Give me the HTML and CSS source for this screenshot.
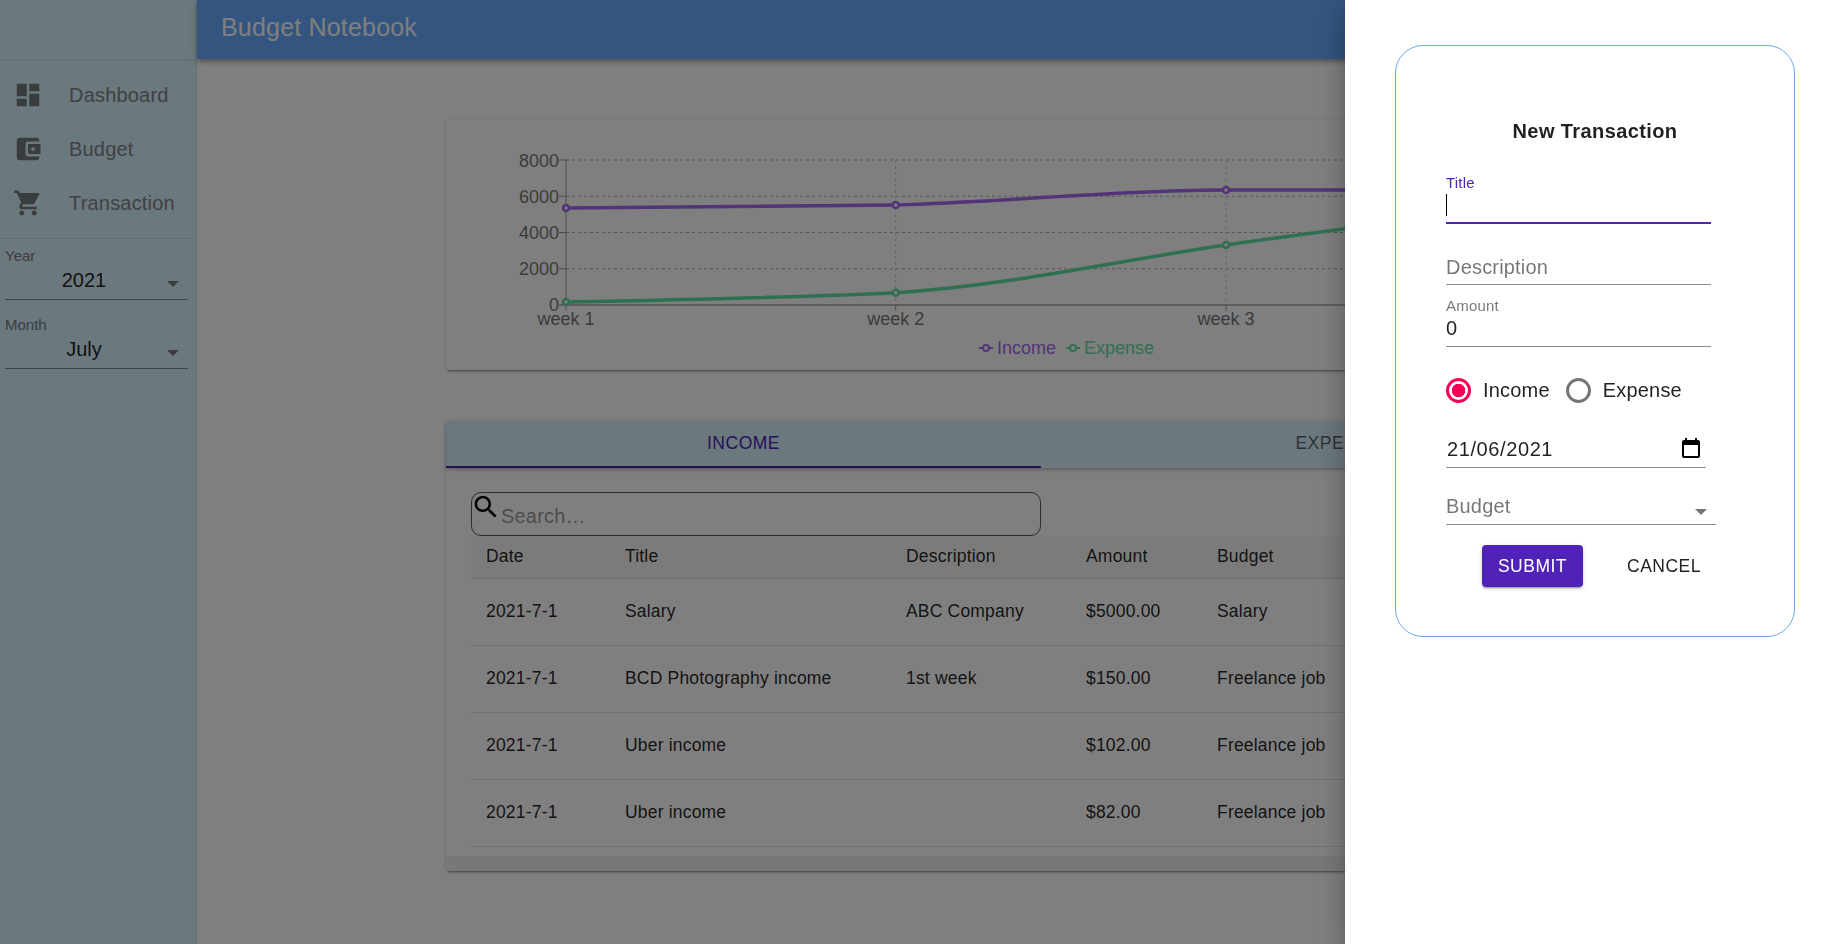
FILE: index.html
```html
<!DOCTYPE html>
<html lang="en">
<head>
  <meta charset="UTF-8"/>
  <meta name="viewport" content="width=device-width, initial-scale=1.0"/>
  <title>Budget Notebook</title>
  <link rel="stylesheet" href="styles.css">
</head>
<body>

  <div class="app">
    <aside class="sidebar">
      <div class="sidebar-top"></div>
      <nav class="nav">
        <a class="nav-item">
          <svg class="icon" viewBox="0 0 24 24"><path d="M3 13h8V3H3v10zm0 8h8v-6H3v6zm10 0h8V11h-8v10zm0-18v6h8V3h-8z"/></svg>
          <span>Dashboard</span>
        </a>
        <a class="nav-item">
          <svg class="icon" viewBox="0 0 24 24"><path d="M21 18v1c0 1.1-.9 2-2 2H5c-1.11 0-2-.9-2-2V5c0-1.1.89-2 2-2h14c1.1 0 2 .9 2 2v1h-9c-1.11 0-2 .9-2 2v8c0 1.1.89 2 2 2h9zm-9-2h10V8H12v8zm4-2.5c-.83 0-1.5-.67-1.5-1.5s.67-1.5 1.5-1.5 1.5.67 1.5 1.5-.67 1.5-1.5 1.5z"/></svg>
          <span>Budget</span>
        </a>
        <a class="nav-item">
          <svg class="icon" viewBox="0 0 24 24"><path d="M7 18c-1.1 0-1.99.9-1.99 2S5.9 22 7 22s2-.9 2-2-.9-2-2-2zM1 2v2h2l3.6 7.59-1.35 2.45c-.16.28-.25.61-.25.96 0 1.1.9 2 2 2h12v-2H7.42c-.14 0-.25-.11-.25-.25l.03-.12.9-1.63h7.45c.75 0 1.41-.41 1.75-1.03l3.58-6.49c.08-.14.12-.31.12-.48 0-.55-.45-1-1-1H5.21l-.94-2H1zm16 16c-1.1 0-1.99.9-1.99 2s.89 2 1.99 2 2-.9 2-2-.9-2-2-2z"/></svg>
          <span>Transaction</span>
        </a>
      </nav>
      <div class="filters">
        <div class="filter">
          <div class="filter-label">Year</div>
          <div class="filter-box">2021<i class="arrow"></i></div>
        </div>
        <div class="filter">
          <div class="filter-label">Month</div>
          <div class="filter-box">July<i class="arrow"></i></div>
        </div>
      </div>
    </aside>

    <div class="main">
      <header class="appbar">Budget Notebook</header>
      <div class="content">

        <section class="card chart-card">
          <svg class="chart" width="1190" height="250" viewBox="0 0 1190 250">
            <g class="grid">
              <line x1="120" y1="40" x2="1190" y2="40"/>
              <line x1="120" y1="76.25" x2="1190" y2="76.25"/>
              <line x1="120" y1="112.5" x2="1190" y2="112.5"/>
              <line x1="120" y1="148.75" x2="1190" y2="148.75"/>
            </g>
            <g class="grid grid-v">
              <line x1="449.7" y1="40" x2="449.7" y2="185"/>
              <line x1="780" y1="40" x2="780" y2="185"/>
              <line x1="1110" y1="40" x2="1110" y2="185"/>
            </g>
            <g class="axis">
              <line x1="120" y1="40" x2="120" y2="191"/>
              <line class="axis-base" x1="113" y1="185" x2="1190" y2="185"/>
              <line x1="113" y1="40" x2="120" y2="40"/>
              <line x1="113" y1="76.25" x2="120" y2="76.25"/>
              <line x1="113" y1="112.5" x2="120" y2="112.5"/>
              <line x1="113" y1="148.75" x2="120" y2="148.75"/>
              <line x1="449.7" y1="185" x2="449.7" y2="191"/>
              <line x1="780" y1="185" x2="780" y2="191"/>
              <line x1="1110" y1="185" x2="1110" y2="191"/>
            </g>
            <g class="axis-text y-labels">
              <text x="113" y="46.5">8000</text>
              <text x="113" y="82.5">6000</text>
              <text x="113" y="119">4000</text>
              <text x="113" y="155">2000</text>
              <text x="113" y="191">0</text>
            </g>
            <g class="axis-text x-labels">
              <text x="120" y="205">week 1</text>
              <text x="449.7" y="205">week 2</text>
              <text x="780" y="205">week 3</text>
              <text x="1110" y="205">week 4</text>
            </g>
            <path class="line income" d="M120 88C230 88 340 87 449.7 85C560 82 670 70 780 70C890 70 1000 70 1190 70"/>
            <path class="line expense" d="M120 182C230 180 340 178 449.7 172.7C560 166 670 141 780 125C890 109.5 1000 95 1110 85"/>
            <g class="dots income">
              <circle cx="120" cy="88" r="3"/>
              <circle cx="449.7" cy="85" r="3"/>
              <circle cx="780" cy="70" r="3"/>
            </g>
            <g class="dots expense">
              <circle cx="120" cy="182" r="3"/>
              <circle cx="449.7" cy="172.7" r="3"/>
              <circle cx="780" cy="125" r="3"/>
            </g>
            <g class="legend income">
              <line x1="533" y1="228" x2="547" y2="228"/>
              <circle cx="540" cy="228" r="3"/>
              <text x="551" y="233.5">Income</text>
            </g>
            <g class="legend expense">
              <line x1="620" y1="228" x2="634" y2="228"/>
              <circle cx="627" cy="228" r="3"/>
              <text x="638" y="233.5">Expense</text>
            </g>
          </svg>
        </section>

        <section class="card table-card">
          <div class="tabs">
            <div class="tab active">INCOME</div>
            <div class="tab">EXPENSE</div>
          </div>
          <div class="tab-body">
            <div class="search">
              <svg class="search-icon" viewBox="0 0 24 24"><path d="M15.5 14h-.79l-.28-.27C15.41 12.59 16 11.11 16 9.5 16 5.91 13.09 3 9.5 3S3 5.91 3 9.5 5.91 16 9.5 16c1.61 0 3.09-.59 4.23-1.57l.27.28v.79l5 4.99L20.49 19l-4.99-5zm-6 0C7.01 14 5 11.99 5 9.5S7.01 5 9.5 5 14 7.01 14 9.5 11.99 14 9.5 14z"/></svg>
              <input type="text" placeholder="Search…"/>
            </div>
            <table class="data-table">
              <colgroup>
                <col class="col-date"/><col class="col-title"/><col class="col-desc"/><col class="col-amount"/><col/>
              </colgroup>
              <thead>
                <tr><th>Date</th><th>Title</th><th>Description</th><th>Amount</th><th>Budget</th></tr>
              </thead>
              <tbody>
                <tr><td>2021-7-1</td><td>Salary</td><td>ABC Company</td><td>$5000.00</td><td>Salary</td></tr>
                <tr><td>2021-7-1</td><td>BCD Photography income</td><td>1st week</td><td>$150.00</td><td>Freelance job</td></tr>
                <tr><td>2021-7-1</td><td>Uber income</td><td></td><td>$102.00</td><td>Freelance job</td></tr>
                <tr><td>2021-7-1</td><td>Uber income</td><td></td><td>$82.00</td><td>Freelance job</td></tr>
              </tbody>
            </table>
          </div>
          <div class="table-scroll"></div>
        </section>

      </div>
    </div>
  </div>

  <div class="backdrop"></div>

  <aside class="drawer">
    <form class="tx-card">
      <h2 class="tx-title">New Transaction</h2>

      <div class="field focused">
        <label class="field-label">Title</label>
        <div class="field-input"><span class="caret"></span></div>
      </div>

      <div class="field field-desc">
        <label class="field-label"></label>
        <div class="field-input placeholder">Description</div>
      </div>

      <div class="field field-amount">
        <label class="field-label">Amount</label>
        <div class="field-input">0</div>
      </div>

      <div class="radios">
        <span class="radio checked"></span><span class="radio-text">Income</span>
        <span class="radio"></span><span class="radio-text">Expense</span>
      </div>

      <div class="line-field date-field">
        <span class="date-text">21/06/2021</span>
        <svg class="calendar" viewBox="0 0 24 24"><path d="M19 3h-1V1h-2v2H8V1H6v2H5c-1.1 0-2 .9-2 2v14c0 1.1.9 2 2 2h14c1.1 0 2-.9 2-2V5c0-1.1-.9-2-2-2zm0 16H5V8h14v11z"/></svg>
      </div>

      <div class="line-field budget-field placeholder">
        Budget<i class="arrow arrow-light"></i>
      </div>

      <div class="actions">
        <button type="button" class="btn-submit">SUBMIT</button>
        <button type="button" class="btn-cancel">CANCEL</button>
      </div>
    </form>
  </aside>

</body>
</html>
```

FILE: styles.css
```css
* {
  box-sizing: border-box;
}
html {
  overflow: hidden;
}
body {
  margin: 0;
  height: 100vh;
  overflow: hidden;
  background: #fff;
  color: rgba(0,0,0,0.87);
  font-family: "Liberation Sans", Arial, sans-serif;
  font-size: 20px;
  letter-spacing: 0.19px;
}
.app {
  display: flex;
  height: 100vh;
}

/* sidebar */
.sidebar {
  width: 197px;
  flex-shrink: 0;
  background: #d6f0fa;
  border-right: 1px solid #c4dce5;
}
.sidebar-top {
  height: 60px;
  border-bottom: 1px solid #c4dce5;
}
.nav {
  padding: 8px 0;
  border-bottom: 1px solid #c4dce5;
}
.nav-item {
  display: flex;
  align-items: center;
  height: 54px;
  padding-left: 13px;
  color: #7f8386;
}
.icon {
  width: 30px;
  height: 30px;
  margin-right: 26px;
  fill: #757a7d;
}
.filters {
  padding: 8px 8px 0 5px;
}
.filter + .filter {
  margin-top: 16px;
}
.filter-label {
  font-size: 15px;
  line-height: 18px;
  letter-spacing: 0;
  color: #787c7f;
}
.filter-box {
  position: relative;
  height: 35px;
  padding-right: 25px;
  line-height: 30px;
  text-align: center;
  border-bottom: 1px solid #7c8a90;
  letter-spacing: 0;
}
.arrow {
  position: absolute;
  top: 16px;
  right: 9px;
  width: 0;
  height: 0;
  border-left: 6px solid transparent;
  border-right: 6px solid transparent;
  border-top: 6px solid #757a7d;
}
.arrow-light {
  top: 16px;
  right: 9px;
  border-top-color: #757575;
}

/* main area */
.main {
  flex: 1;
  min-width: 0;
}
.appbar {
  height: 59px;
  padding-left: 24px;
  background: #66aaff;
  color: #fff;
  font-size: 25px;
  line-height: 54px;
  letter-spacing: 0.19px;
  box-shadow: 0 2px 4px -1px rgba(0,0,0,0.2), 0 4px 5px rgba(0,0,0,0.14), 0 1px 10px rgba(0,0,0,0.12);
}
.content {
  width: 1190px;
  margin: 61px 0 0 249px;
}
.card {
  background: #fff;
  border-radius: 4px;
  box-shadow: 0 3px 1px -2px rgba(0,0,0,0.2), 0 2px 2px rgba(0,0,0,0.14), 0 1px 5px rgba(0,0,0,0.12);
}
.chart-card {
  height: 250px;
  margin-bottom: 50px;
}
.chart {
  display: block;
  font-size: 18px;
  letter-spacing: 0;
}
.grid line {
  stroke: #aaa;
  stroke-dasharray: 3 3;
}
.grid-v line {
  stroke: #ccc;
}
.axis line {
  stroke: #999;
}
.axis .axis-base {
  stroke: #bbb;
  stroke-width: 2;
}
.axis-text {
  fill: #777;
}
.y-labels {
  text-anchor: end;
}
.x-labels {
  text-anchor: middle;
}
.line {
  fill: none;
  stroke-width: 3.5;
}
.line.income {
  stroke: #a468f0;
}
.line.expense {
  stroke: #60e0a4;
}
.dots circle,
.legend circle {
  fill: #fff;
  stroke-width: 2.5;
}
.dots.income circle,
.legend.income circle,
.legend.income line {
  stroke: #a468f0;
}
.dots.expense circle,
.legend.expense circle,
.legend.expense line {
  stroke: #60e0a4;
}
.legend line,
.legend circle {
  stroke-width: 2;
}
.legend.income text {
  fill: #a468f0;
}
.legend.expense text {
  fill: #60e0a4;
}

/* table card */
.tabs {
  display: grid;
  grid-template-columns: 595px 595px;
  height: 48px;
  background: #d6f0fa;
  border-radius: 4px 4px 0 0;
  box-shadow: 0 2px 4px -1px rgba(0,0,0,0.2), 0 2px 3px rgba(0,0,0,0.12);
}
.tab {
  text-align: center;
  font-size: 17.5px;
  line-height: 46px;
  letter-spacing: 0.5px;
  color: rgba(0,0,0,0.6);
}
.tab.active {
  color: #5022b8;
  border-bottom: 2px solid #5022b8;
}
.tab-body {
  padding: 24px 20px 9px 25px;
}
.search {
  display: flex;
  width: 570px;
  height: 44px;
  border: 1px solid rgba(0,0,0,0.65);
  border-radius: 10px;
}
.search-icon {
  width: 30px;
  height: 30px;
  flex-shrink: 0;
  margin-left: -1px;
  margin-top: -1px;
}
.search input {
  flex: 1;
  min-width: 0;
  padding: 5px 0 0;
  border: none;
  outline: none;
  background: transparent;
  font: inherit;
  letter-spacing: 0.19px;
}
.search input::placeholder {
  color: rgba(0,0,0,0.42);
  opacity: 1;
}
.data-table {
  width: 1145px;
  table-layout: fixed;
  border-collapse: collapse;
  font-size: 17.5px;
  letter-spacing: 0.19px;
}
.col-date {
  width: 139px;
}
.col-title {
  width: 281px;
}
.col-desc {
  width: 180px;
}
.col-amount {
  width: 131px;
}
.data-table th,
.data-table td {
  padding: 0 15px;
  text-align: left;
  font-weight: normal;
  border-bottom: 1px solid #e0e0e0;
  white-space: nowrap;
}
.data-table th {
  height: 42px;
  background: #f7f7f7;
}
.data-table td {
  height: 67px;
}
.table-scroll {
  height: 15px;
  background: #f1f1f1;
  border-radius: 0 0 4px 4px;
}

/* backdrop and drawer */
.backdrop {
  position: fixed;
  inset: 0;
  background: rgba(0,0,0,0.5);
}
.drawer {
  position: fixed;
  top: 0;
  right: 0;
  bottom: 0;
  width: 500px;
  padding: 45px 50px 0;
  background: #fff;
  box-shadow: 0 8px 10px -5px rgba(0,0,0,0.2), 0 16px 24px 2px rgba(0,0,0,0.14), 0 6px 30px 5px rgba(0,0,0,0.12);
}
.tx-card {
  padding: 70px 0 49px 50px;
  border: 1px solid #6ea8f0;
  border-radius: 28px;
}
.tx-title {
  margin: 0 0 28px -50px;
  font-size: 20px;
  line-height: 30px;
  font-weight: bold;
  text-align: center;
  letter-spacing: 0.4px;
}
.field {
  width: 265px;
  height: 50px;
  border-bottom: 1px solid #8c8c8c;
}
.field.focused {
  border-bottom: 2px solid #5022b8;
}
.field-desc {
  margin-top: 11px;
}
.field-desc .field-input {
  padding-top: 1px;
}
.field-amount {
  margin-top: 12px;
}
.field-label {
  display: block;
  height: 18px;
  font-size: 15px;
  line-height: 18px;
  color: rgba(0,0,0,0.54);
}
.focused .field-label {
  color: #5022b8;
}
.field-input {
  line-height: 26px;
}
.placeholder {
  color: rgba(0,0,0,0.54);
}
.caret {
  display: block;
  width: 1px;
  height: 22px;
  margin-top: 2px;
  background: #000;
}
.radios {
  display: flex;
  align-items: center;
  height: 26px;
  margin-top: 30px;
}
.radio {
  width: 25px;
  height: 25px;
  margin-right: 12px;
  border: 3px solid #757575;
  border-radius: 50%;
}
.radio.checked {
  border-color: #f50057;
  background: radial-gradient(circle, #f50057 6.5px, transparent 7px);
}
.radio-text {
  margin-right: 16px;
}
.line-field {
  position: relative;
  height: 32px;
  line-height: 26px;
  border-bottom: 1px solid #8c8c8c;
}
.date-field {
  display: flex;
  justify-content: space-between;
  width: 260px;
  margin-top: 33px;
  padding-left: 1px;
}
.date-text {
  letter-spacing: 0.6px;
}
.calendar {
  width: 24px;
  height: 24px;
  margin: 1px 3px 0 0;
}
.budget-field {
  width: 270px;
  margin-top: 25px;
}
.actions {
  display: flex;
  align-items: center;
  gap: 29px;
  margin-top: 20px;
  padding-left: 36px;
}
.actions button {
  height: 42px;
  padding: 0 15px;
  border: none;
  border-radius: 4px;
  font-family: inherit;
  font-size: 17.5px;
  letter-spacing: 0.5px;
}
.btn-submit {
  width: 101px;
  background: #5022b8;
  color: #fff;
  box-shadow: 0 3px 1px -2px rgba(0,0,0,0.2), 0 2px 2px rgba(0,0,0,0.14), 0 1px 5px rgba(0,0,0,0.12);
}
.btn-cancel {
  background: transparent;
  color: rgba(0,0,0,0.87);
}
```
